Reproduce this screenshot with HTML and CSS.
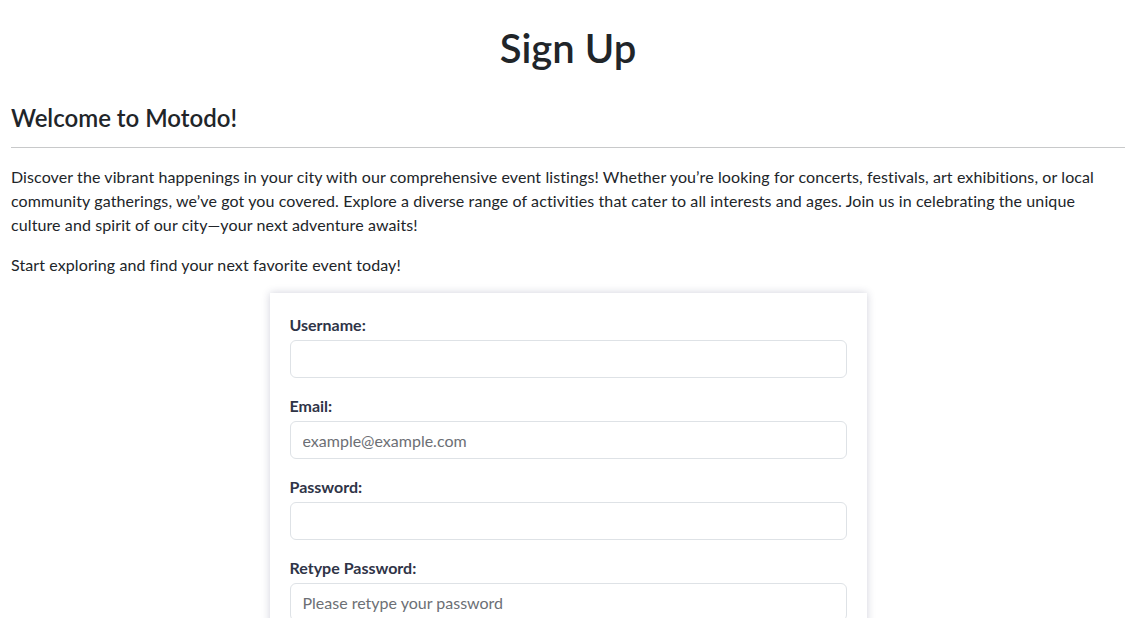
FILE: index.html
```html
<!DOCTYPE html>
<html lang="en">
<head>
<meta charset="utf-8">
<title>Sign Up</title>
<link rel="stylesheet" href="styles.css">
</head>
<body>
<div class="page">
  <h1 class="title">Sign Up</h1>
  <h2 class="welcome">Welcome to Motodo!</h2>
  <hr class="rule">
  <p class="intro">Discover the vibrant happenings in your city with our comprehensive event listings! Whether you’re looking for concerts, festivals, art exhibitions, or local community gatherings, we’ve got you covered. Explore a diverse range of activities that cater to all interests and ages. Join us in celebrating the unique culture and spirit of our city—your next adventure awaits!</p>
  <p class="intro">Start exploring and find your next favorite event today!</p>
  <form class="card">
    <div class="field">
      <label class="label" for="username">Username:</label>
      <input class="input" id="username" type="text">
    </div>
    <div class="field">
      <label class="label" for="email">Email:</label>
      <input class="input" id="email" type="email" placeholder="example@example.com">
    </div>
    <div class="field">
      <label class="label" for="password">Password:</label>
      <input class="input" id="password" type="password">
    </div>
    <div class="field">
      <label class="label" for="retype">Retype Password:</label>
      <input class="input" id="retype" type="password" placeholder="Please retype your password">
    </div>
    <button class="submit" type="submit">Sign Up</button>
  </form>
</div>
</body>
</html>
```

FILE: styles.css
```css
* { box-sizing: border-box; }

body {
  margin: 0;
  font-family: "Lato", "Noto Sans", sans-serif;
  font-size: 16px;
  line-height: 1.5;
  color: #212529;
  background: #fff;
}

.page {
  padding: 0 11px;
}

.title {
  margin: 0;
  padding-top: 24px;
  font-size: 40px;
  line-height: 48px;
  font-weight: 600;
  text-align: center;
}

.welcome {
  margin: 31px 0 0;
  font-size: 24px;
  line-height: 29px;
  font-weight: 600;
}

.rule {
  margin: 15px 0 17px;
  border: 0;
  border-top: 1px solid #c8c9ca;
}

.intro {
  margin: 0 0 16px;
  letter-spacing: 0.1px;
}

.card {
  width: 597px;
  margin: 0 auto 40px;
  padding: 20px;
  background: #fff;
  box-shadow: 0 0 8px rgba(40, 45, 90, 0.22);
}

.field {
  margin-bottom: 16px;
}

.label {
  display: block;
  margin-bottom: 3px;
  font-weight: 700;
  color: #2f3447;
}

.input {
  display: block;
  width: 100%;
  height: 38px;
  padding: 6px 12px;
  font: inherit;
  color: #212529;
  border: 1px solid #dee2e6;
  border-radius: 6px;
  background: #fff;
}

.input::placeholder {
  color: #6c6f75;
}

.submit {
  padding: 6px 12px;
  font: inherit;
  color: #fff;
  background: #0d6efd;
  border: 1px solid #0d6efd;
  border-radius: 6px;
}
```
